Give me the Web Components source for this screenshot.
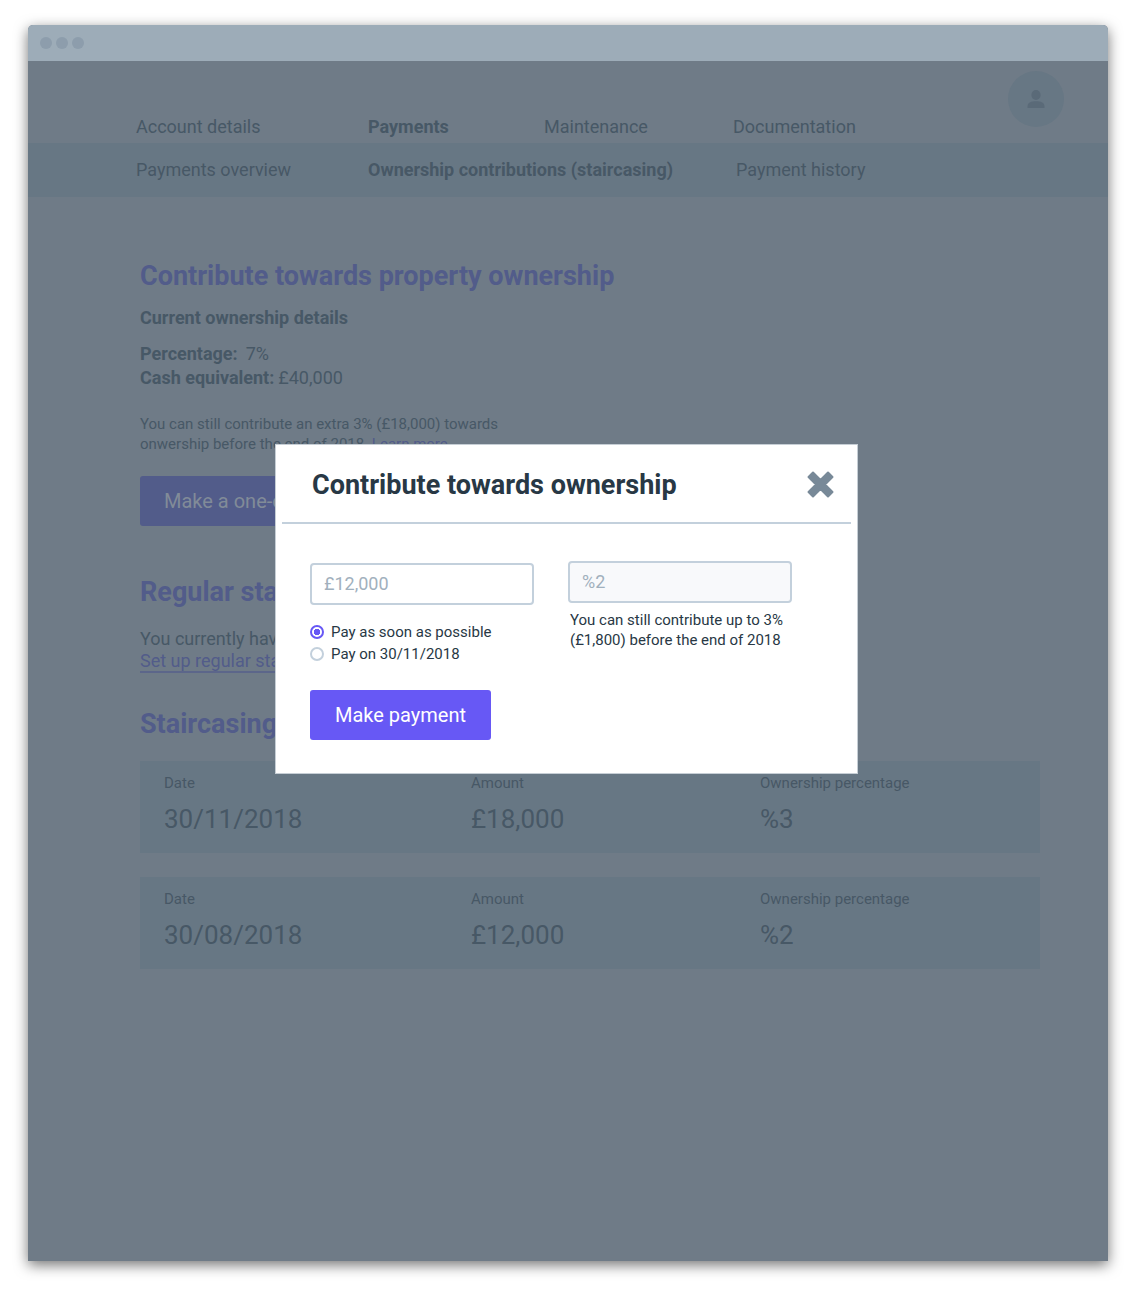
<!DOCTYPE html>
<html lang="en">
<head>
<meta charset="utf-8">
<meta name="viewport" content="width=device-width, initial-scale=1">
<title>Ownership contributions</title>
<style>
  html { background: #fff; }
  body {
    margin: 0;
    min-height: 100vh;
    box-sizing: border-box;
    padding: 25px 28px 31px;
    display: flex;
    font: 400 18px/24px Roboto, "Open Sans", "Liberation Sans", sans-serif;
    color: #475866;
    --page: #6f7b87;
    --band: #677784;
    --dim-accent: #525c8a;
    --ink: #283845;
    --line: #c3d0dc;
    --accent: #6758f5;
  }
</style>
</head>
<body>
<browser-window>
  <site-header slot="page"></site-header>
  <ownership-page slot="page">
    <payment-record date="30/11/2018" amount="£18,000" percentage="%3"></payment-record>
    <payment-record date="30/08/2018" amount="£12,000" percentage="%2"></payment-record>
  </ownership-page>
  <modal-dialog slot="overlay" heading="Contribute towards ownership">
    <contribution-form></contribution-form>
  </modal-dialog>
</browser-window>

<script>
const define = (name, html, setup) => {
  const template = document.createElement('template');
  template.innerHTML = html;
  customElements.define(name, class extends HTMLElement {
    connectedCallback() {
      if (this.shadowRoot) return;
      const root = this.attachShadow({ mode: 'open' });
      root.append(template.content.cloneNode(true));
      if (setup) setup(this, root);
    }
  });
};

define('browser-window', `
  <style>
    :host {
      flex: 1; min-width: 0; display: flex; flex-direction: column;
      border-radius: 5px 5px 0 0; background: var(--page);
      box-shadow: 0 4px 14px rgba(0, 0, 0, .55);
    }
    .bar {
      height: 36px; box-sizing: border-box; padding: 0 12px;
      display: flex; align-items: center; gap: 4px;
      border-radius: 5px 5px 0 0; background: #9dacb8;
    }
    .bar i { width: 12px; height: 12px; border-radius: 50%; background: #8d9dac; }
    .view { flex: 1; position: relative; }
  </style>
  <div class="bar"><i></i><i></i><i></i></div>
  <div class="view"><slot name="page"></slot><slot name="overlay"></slot></div>
`);

define('site-header', `
  <style>
    :host { display: block; }
    a { color: inherit; text-decoration: none; white-space: nowrap; }
    a[aria-current] { font-weight: 700; }
    .top { height: 82px; display: flex; align-items: flex-start; padding: 0 44px 0 108px; }
    nav { display: grid; }
    .main { flex: 1; height: 78px; align-items: end; grid-template-columns: 232px 176px 189px auto; }
    .sub {
      height: 54px; align-items: center; padding-left: 108px;
      grid-template-columns: 232px 368px auto; background: var(--band);
    }
    button {
      width: 56px; height: 56px; margin: 10px 0 0; padding: 0; border: 0; border-radius: 50%;
      background: var(--band); color: #5a6a78; display: grid; place-items: center;
    }
  </style>
  <header>
    <div class="top">
      <nav class="main" aria-label="Main">
        <a href="#account">Account details</a>
        <a href="#payments" aria-current="true">Payments</a>
        <a href="#maintenance">Maintenance</a>
        <a href="#documentation">Documentation</a>
      </nav>
      <button type="button" aria-label="Profile">
        <svg width="18" height="18" viewBox="0 0 18 18" fill="currentColor">
          <ellipse cx="9" cy="5" rx="4.6" ry="5"/>
          <path d="M.5 18v-1.600C.5 12.500 4 11.200 9 11.200s8.500 1.300 8.500 5.200V18z"/>
        </svg>
      </button>
    </div>
    <nav class="sub" aria-label="Payments">
      <a href="#overview">Payments overview</a>
      <a href="#staircasing" aria-current="page">Ownership contributions (staircasing)</a>
      <a href="#history">Payment history</a>
    </nav>
  </header>
`);

define('ownership-page', `
  <style>
    :host { display: block; padding: 63px 68px 40px 112px; }
    h1, h2, h3, p, dl, dd { margin: 0; }
    h1, h2 { font-size: 27px; line-height: 32px; font-weight: 700; color: var(--dim-accent); }
    h3 { font-size: 18px; line-height: 24px; margin: 14px 0 12px; }
    dl div { display: flex; gap: 4px; }
    dl div:first-child { gap: 8px; }
    dt { font-weight: 700; }
    a { color: var(--dim-accent); }
    .note { font-size: 15px; line-height: 20px; margin: 24px 0 22px; max-width: 360px; }
    button {
      font: inherit; font-size: 20px; height: 50px; padding: 0 24px; border: 0; border-radius: 3px;
      background: var(--dim-accent); color: #818b98; display: block; margin-bottom: 50px;
    }
    .regular { line-height: 22px; margin: 20px 0 36px; }
    .regular a { text-decoration: none; box-shadow: 0 2px 0 #5c668a; }
    .records { display: grid; gap: 24px; margin-top: 21px; }
  </style>
  <main>
    <h1>Contribute towards property ownership</h1>
    <h3>Current ownership details</h3>
    <dl>
      <div><dt>Percentage:</dt><dd>7%</dd></div>
      <div><dt>Cash equivalent:</dt><dd>£40,000</dd></div>
    </dl>
    <p class="note">You can still contribute an extra 3% (£18,000) towards onwership before the end of 2018. <a href="#more">Learn more</a></p>
    <button type="button">Make a one-off payment</button>
    <h2>Regular staircasing</h2>
    <p class="regular">You currently have none<br><a href="#setup">Set up regular staircasing</a></p>
    <h2>Staircasing history</h2>
    <div class="records"><slot></slot></div>
  </main>
`);

define('payment-record', `
  <style>
    :host { display: block; background: var(--band); }
    dl {
      margin: 0; height: 92px; box-sizing: border-box; padding: 12px 24px 0;
      display: grid; grid-template-columns: 307fr 289fr 256fr;
    }
    dt { font-size: 15px; line-height: 20px; }
    dd { margin: 10px 0 0; font-size: 26px; line-height: 32px; }
  </style>
  <dl>
    <div><dt>Date</dt><dd data-field="date"></dd></div>
    <div><dt>Amount</dt><dd data-field="amount"></dd></div>
    <div><dt>Ownership percentage</dt><dd data-field="percentage"></dd></div>
  </dl>
`, (host, root) => {
  root.querySelectorAll('dd').forEach(dd => { dd.textContent = host.getAttribute(dd.dataset.field); });
});

define('modal-dialog', `
  <style>
    :host {
      position: absolute; inset: 0; display: flex; justify-content: center; align-items: flex-start;
      padding: 383px 3px 0 0; color: var(--ink);
    }
    section { width: 583px; box-sizing: border-box; border: 1px solid #c6ced5; background: #fff; }
    header {
      height: 79px; box-sizing: border-box; margin: 0 6px; padding: 2px 17px 0 30px;
      display: flex; align-items: center; justify-content: space-between;
      border-bottom: 2px solid var(--line);
    }
    h2 { margin: 0; font-size: 27px; line-height: 32px; font-weight: 700; }
    button { width: 27px; height: 27px; padding: 0; border: 0; background: none; color: #788998; }
    svg { display: block; }
  </style>
  <section role="dialog" aria-labelledby="title">
    <header>
      <h2 id="title"></h2>
      <button type="button" aria-label="Close">
        <svg width="27" height="27" viewBox="0 0 27 27" fill="currentColor" stroke="currentColor" stroke-width="2" stroke-linejoin="round">
          <path d="M6 1.500l7.500 7.500L21 1.500 25.500 6 18 13.500l7.500 7.500-4.500 4.500-7.500-7.500L6 25.500 1.500 21 9 13.500 1.500 6z"/>
        </svg>
      </button>
    </header>
    <slot></slot>
  </section>
`, (host, root) => { root.getElementById('title').textContent = host.getAttribute('heading'); });

define('contribution-form', `
  <style>
    :host { display: block; }
    form { display: grid; grid-template-columns: 224px 224px; gap: 34px; padding: 37px 34px 33px; }
    .amount { padding-top: 2px; }
    input[type="text"] {
      display: block; width: 100%; height: 42px; box-sizing: border-box; margin: 0; padding: 0 12px 2px;
      border: 2px solid var(--line); border-radius: 4px; background: #fff;
      font: inherit; color: #a1b0bd;
    }
    input[readonly] { background: #f8f9fb; }
    fieldset { margin: 16px 0 25px; padding: 0; border: 0; font-size: 15px; line-height: 22px; }
    fieldset label { display: flex; align-items: center; gap: 7px; white-space: nowrap; }
    input[type="radio"] {
      appearance: none; flex: none; width: 14px; height: 14px; box-sizing: border-box; margin: 0;
      border: 2px solid var(--line); border-radius: 50%;
    }
    input[type="radio"]:checked {
      border-color: var(--accent);
      background: radial-gradient(circle, var(--accent) 3px, #fff 3.500px);
    }
    p { margin: 7px 0 0; padding-left: 2px; font-size: 15px; line-height: 20px; }
    button {
      font: inherit; font-size: 20px; height: 50px; padding: 0 25px; border: 0; border-radius: 3px;
      background: var(--accent); color: #fff; display: block;
    }
  </style>
  <form>
    <div class="amount">
      <input type="text" aria-label="Amount" value="£12,000">
      <fieldset>
        <label><input type="radio" name="when" checked>Pay as soon as possible</label>
        <label><input type="radio" name="when">Pay on 30/11/2018</label>
      </fieldset>
      <button type="button">Make payment</button>
    </div>
    <div>
      <input type="text" aria-label="Ownership percentage" aria-describedby="limit" value="%2" readonly>
      <p id="limit">You can still contribute up to 3% (£1,800) before the end of 2018</p>
    </div>
  </form>
`);
</script>
</body>
</html>
